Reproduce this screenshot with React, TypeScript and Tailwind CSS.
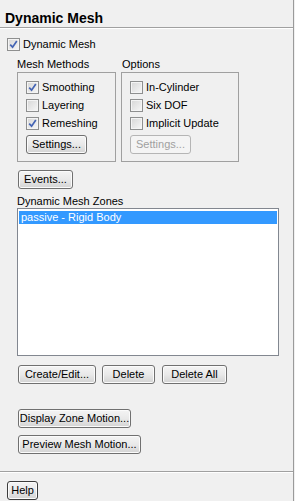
import React from "react";

function Check({ checked }: { checked?: boolean }) {
  return (
    <div className="relative w-[13px] h-[13px] shrink-0 border border-[#8e8f8f] bg-linear-to-br from-[#d6d6d6] to-[#f7f7f7] shadow-[inset_0_0_0_1px_#f4f4f4]">
      {checked && (
        <svg
          className="absolute left-[1px] top-[1px]"
          width="9"
          height="9"
          viewBox="0 0 9 9"
        >
          <path
            d="M1.2 4.6 L3.6 7.2 L7.8 1"
            fill="none"
            stroke="#4464b4"
            strokeWidth="1.7"
          />
        </svg>
      )}
    </div>
  );
}

function CheckRow({ label, checked }: { label: string; checked?: boolean }) {
  return (
    <div className="flex items-center gap-[3px] h-[13px] leading-[13px]">
      <Check checked={checked} />
      <span>{label}</span>
    </div>
  );
}

function Btn({
  label,
  w,
  disabled,
  dark,
}: {
  label: string;
  w: string;
  disabled?: boolean;
  dark?: boolean;
}) {
  return (
    <div
      className={
        "h-[19px] flex items-center justify-center rounded-[3px] border leading-[13px] shrink-0 " +
        w +
        (disabled
          ? " border-[#b5b5b5] bg-[#f4f4f4] text-[#a0a0a0]"
          : dark
          ? " border-[#3c3c3c] bg-linear-to-b from-[#f4f4f4] via-[#e9e9e9] to-[#d3d3d3] shadow-[inset_0_0_0_1px_#fbfbfb]"
          : " border-[#707070] bg-linear-to-b from-[#f4f4f4] via-[#e9e9e9] to-[#d3d3d3] shadow-[inset_0_0_0_1px_#fbfbfb]")
      }
    >
      {label}
    </div>
  );
}

export default function App() {
  return (
    <div className="w-[295px] h-[501px] bg-[#f0f0f0] flex font-['Liberation_Sans',Arial,sans-serif] text-[11px] text-black overflow-hidden">
      <div className="w-[294px] h-full border-r border-[#9a9a9a] flex flex-col">
        <div className="h-[27px] pt-[10px] pl-[5px] text-[14px] font-bold leading-4">
          Dynamic Mesh
        </div>
        <div className="h-px bg-[#a0a0a0]" />
        <div className="h-px bg-white" />

        <div className="mt-[9px] pl-[7px]">
          <CheckRow label="Dynamic Mesh" checked />
        </div>

        <div className="mt-[7px] ml-[17px] flex gap-[5px]">
          <div className="w-[99px] flex flex-col">
            <div className="h-[13px] leading-[13px] mb-px">Mesh Methods</div>
            <div className="h-[90px] border border-[#a0a0a0] pt-[8px] pl-[8px] flex flex-col gap-[5px]">
              <CheckRow label="Smoothing" checked />
              <CheckRow label="Layering" />
              <CheckRow label="Remeshing" checked />
              <Btn label="Settings..." w="w-[61px]" />
            </div>
          </div>
          <div className="w-[118px] flex flex-col">
            <div className="h-[13px] leading-[13px] mb-px pl-px">Options</div>
            <div className="h-[90px] border border-[#a0a0a0] pt-[8px] pl-[8px] flex flex-col gap-[5px]">
              <CheckRow label="In-Cylinder" />
              <CheckRow label="Six DOF" />
              <CheckRow label="Implicit Update" />
              <Btn label="Settings..." w="w-[61px]" disabled />
            </div>
          </div>
        </div>

        <div className="mt-[8px] ml-[18px] flex">
          <Btn label="Events..." w="w-[55px]" />
        </div>

        <div className="mt-[6px] ml-[17px] h-[13px] leading-[13px]">
          Dynamic Mesh Zones
        </div>
        <div className="ml-[17px] w-[262px] h-[148px] border border-[#828790] bg-white pt-[2px] px-px">
          <div className="h-[13px] leading-[13px] bg-[#3399ff] text-white pl-[2px]">
            passive - Rigid Body
          </div>
        </div>

        <div className="mt-[9px] ml-[18px] flex">
          <Btn label="Create/Edit..." w="w-[78px]" />
          <div className="ml-[6px]">
            <Btn label="Delete" w="w-[53px]" />
          </div>
          <div className="ml-[7px]">
            <Btn label="Delete All" w="w-[65px]" />
          </div>
        </div>

        <div className="mt-[25px] ml-[18px] flex">
          <Btn label="Display Zone Motion..." w="w-[113px]" />
        </div>
        <div className="mt-[7px] ml-[18px] flex">
          <Btn label="Preview Mesh Motion..." w="w-[123px]" />
        </div>

        <div className="mt-[17px] h-px bg-[#a0a0a0]" />
        <div className="h-px bg-white" />

        <div className="mt-[8px] ml-[7px] flex">
          <Btn label="Help" w="w-[31px]" dark />
        </div>
      </div>
    </div>
  );
}
